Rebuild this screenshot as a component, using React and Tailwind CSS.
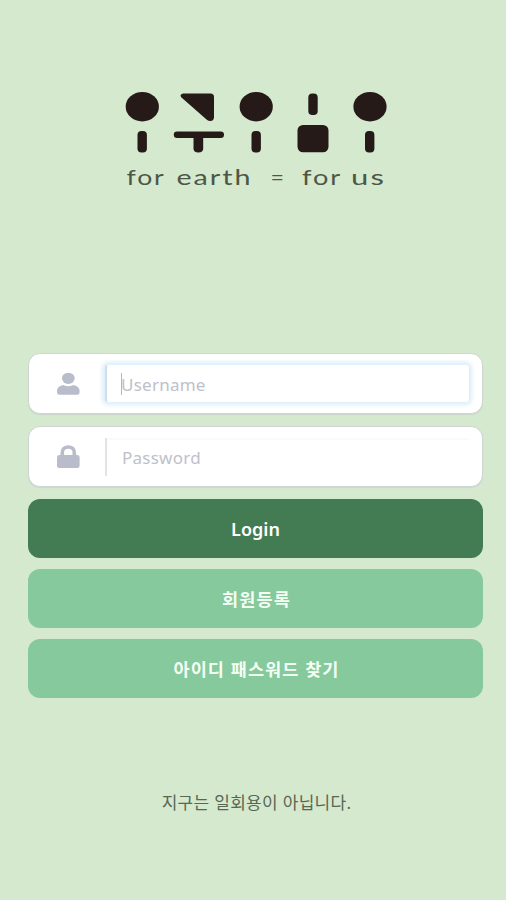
import React from "react";

function Logo() {
  return (
    <svg width="270" height="104" viewBox="120 88 270 104" fill="#251a17" role="img" aria-label="for earth = for us">
      <g>
        <ellipse cx="142.3" cy="106.7" rx="16.6" ry="14.7" />
        <rect x="137.5" y="131" width="9.4" height="21.4" rx="4" />
        <path d="M183 93.5h27.500q3.500 0 3.500 3.500v20.500q-.5 4-4.500 3.500q-1.500-.2-3-1.500L181.500 97.500q-2.500-3 1.500-4z" />
        <rect x="173.800" y="131.400" width="50.200" height="6.600" rx="3.200" />
        <path d="M193.500 136h9.700v12.400q0 4-4.850 4t-4.850-4z" />
        <ellipse cx="256.200" cy="106.700" rx="16.600" ry="14.700" />
        <rect x="251.500" y="131" width="9.400" height="21.400" rx="4" />
        <rect x="308.300" y="93.500" width="9.400" height="21.500" rx="4" />
        <rect x="297.500" y="125" width="31" height="27.300" rx="5.500" />
        <ellipse cx="370" cy="106.700" rx="16.600" ry="14.700" />
        <rect x="365" y="131" width="9.400" height="21.400" rx="4" />
      </g>
      <g className="font-['Lato',sans-serif] text-[22px] tracking-[1.5px]" fill="#4e5746">
        <text x="126.500" y="185.300" textLength="39" lengthAdjust="spacingAndGlyphs">for</text>
        <text x="176.500" y="185.300" textLength="76" lengthAdjust="spacingAndGlyphs">earth</text>
        <text x="270.500" y="185.300" textLength="15" lengthAdjust="spacingAndGlyphs">=</text>
        <text x="302" y="185.300" textLength="40" lengthAdjust="spacingAndGlyphs">for</text>
        <text x="351" y="185.300" textLength="35" lengthAdjust="spacingAndGlyphs">us</text>
      </g>
    </svg>
  );
}

function UserIcon() {
  return (
    <svg width="24" height="24" viewBox="0 0 24 24" fill="#b9bccb">
      <ellipse cx="12.300" cy="6.300" rx="6.400" ry="5.600" />
      <path d="M7.800 13.200q4.500 2 9 0c4 0 6.800 2.500 6.800 6v1.300q0 2.300-2.500 2.300H3.500Q1 22.800 1 20.500v-1.300c0-3.500 2.800-6 6.800-6z" />
    </svg>
  );
}

function LockIcon() {
  return (
    <svg width="24" height="24" viewBox="0 0 24 24" fill="#b9bccb">
      <rect x="1" y="10" width="22.600" height="13" rx="2.300" />
      <path d="M6.300 11V7.500C6.300 4 8.800 2 12.300 2s6 2 6 5.500V11" fill="none" stroke="#b9bccb" strokeWidth="3.600" />
    </svg>
  );
}

function Field({ icon, label, focused }) {
  return (
    <div className="flex h-[61px] items-center rounded-[12px] border border-[#cdd6d2] bg-white shadow-[0_1px_1px_#cbd5cd]">
      <div className="flex w-[76px] justify-center pl-[2px]">{icon}</div>
      <div
        className={
          focused
            ? "mr-[13px] flex h-[37px] flex-1 items-center rounded-[3px] border-l-2 border-[#d0dfeb] bg-white pl-[14px] shadow-[0_0_4px_3px_#dceefb]"
            : "mr-[13px] flex h-[38px] flex-1 items-center border-l-2 border-[#e3e3e6] bg-white pl-[15px] shadow-[inset_0_2px_1px_#fafafa]"
        }
      >
        {focused && <span className="-mr-px h-[22px] w-px bg-[#b5b5b8]" />}
        <span className="pt-[2px] text-[17px] leading-[24px] tracking-[0.25px] text-[#bdc1ca]">{label}</span>
      </div>
    </div>
  );
}

function Button({ children, primary }) {
  return (
    <button
      className={
        primary
          ? "flex h-[59px] w-full items-center justify-center rounded-[12px] bg-[#437b53] pt-[2px] text-[18px] font-semibold text-white"
          : "flex h-[59px] w-full items-center justify-center rounded-[12px] bg-[#85c99d] pt-[2px] pl-[2px] text-[17.5px] font-bold tracking-[1.100px] text-[#f4fff4]"
      }
    >
      {children}
    </button>
  );
}

export default function App() {
  return (
    <main className="flex h-[900px] w-[506px] flex-col bg-[#d5e9cf] pt-[88px] font-['Noto_Sans','Noto_Sans_CJK_KR',sans-serif]">
      <div className="ml-[120px] h-[104px]">
        <Logo />
      </div>
      <form className="mr-[23px] ml-[28px] mt-[161px] flex flex-col">
        <Field icon={<UserIcon />} label="Username" focused />
        <div className="mt-[12px]">
          <Field icon={<LockIcon />} label="Password" />
        </div>
        <div className="mt-[12px] flex flex-col gap-[11px]">
          <Button primary>Login</Button>
          <Button>회원등록</Button>
          <Button>아이디 패스워드 찾기</Button>
        </div>
      </form>
      <p className="mt-[92px] pl-[7px] text-center text-[17px] leading-[26px] tracking-[0.3px] text-[#59674f]">지구는 일회용이 아닙니다.</p>
    </main>
  );
}
